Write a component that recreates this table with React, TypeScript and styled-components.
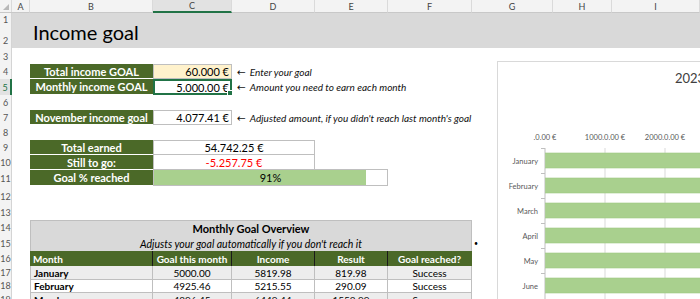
import React from 'react';
import styled, { createGlobalStyle, css } from 'styled-components';

const GlobalStyle = createGlobalStyle`
  html, body {
    margin: 0;
    padding: 0;
    background: #fff;
    overflow: hidden;
  }
  body {
    font-family: Lato, "Liberation Sans", sans-serif;
  }
`;

const GREEN = '#4b6928';
const EXCEL = '#217346';
const LINE = '#bfbfbf';

const COLS = ['A', 'B', 'C', 'D', 'E', 'F', 'G', 'H', 'I'];
const COL_WIDTHS = [18, 123, 79, 83, 73, 84, 81, 59, 88];
const ROW_HEIGHTS = [14, 21, 16, 15, 16, 15, 15, 15, 15, 15, 16, 18, 16, 15, 16, 15, 14, 13, 14];

// grid line of a sheet column, the first grid column is the row header
const col = (letter: string) => COLS.indexOf(letter) + 2;

type Place = { $c: number; $r: number; $cs?: number; $rs?: number };

const place = css<Place>`
  grid-column: ${p => p.$c} / span ${p => p.$cs ?? 1};
  grid-row: ${p => p.$r + 1} / span ${p => p.$rs ?? 1};
`;

const Sheet = styled.div`
  position: relative;
  display: grid;
  grid-template-columns: 12px ${COL_WIDTHS.map(w => `${w}px`).join(' ')};
  grid-template-rows: 13px ${ROW_HEIGHTS.map(h => `${h}px`).join(' ')};
  width: 700px;
  height: 299px;
  overflow: hidden;
`;

const Corner = styled.div`
  grid-column: 1 / span 2;
  grid-row: 1;
  display: grid;
  grid-template-columns: 12px 1fr;
  background: #f3f3f3;
  border-bottom: 1px solid #c8c8c8;
`;

const CornerMark = styled.div`
  position: relative;
  border-right: 1px solid #dadada;

  &::after {
    content: '';
    position: absolute;
    right: 2px;
    bottom: 2px;
    width: 0;
    height: 0;
    border-left: 6px solid transparent;
    border-bottom: 6px solid #b8b8b8;
  }
`;

const ColHead = styled.div<Place & { $active?: boolean }>`
  ${place};
  display: flex;
  align-items: center;
  justify-content: center;
  background: ${p => (p.$active ? '#e2e2e2' : '#f3f3f3')};
  border-right: 1px solid #dadada;
  border-bottom: ${p => (p.$active ? `2px solid ${EXCEL}` : '1px solid #c8c8c8')};
  font-size: 9px;
  color: #444;
  box-sizing: border-box;
`;

const RowHead = styled.div<Place & { $active?: boolean }>`
  ${place};
  display: flex;
  align-items: flex-end;
  justify-content: center;
  padding-bottom: 2px;
  box-sizing: border-box;
  background: ${p => (p.$active ? '#e2e2e2' : '#f3f3f3')};
  border-right: ${p => (p.$active ? `2px solid ${EXCEL}` : '1px solid #d4d4d4')};
  font-size: 9px;
  line-height: 10px;
  color: ${p => (p.$active ? EXCEL : '#555')};
`;

const TitleBand = styled.div<Place>`
  ${place};
  display: flex;
  align-items: center;
  padding: 2px 0 0 21px;
  background: #d9d9d9;
  font-size: 20px;
  color: #000;
`;

const Label = styled.div<Place>`
  ${place};
  display: flex;
  align-items: center;
  justify-content: center;
  background: ${GREEN};
  border-bottom: 1px solid #fff;
  color: #fff;
  font-weight: 700;
  font-size: 11px;
  white-space: nowrap;
`;

const Value = styled.div<Place & { $bg?: string; $align?: string; $color?: string; $top?: boolean; $selected?: boolean }>`
  ${place};
  position: relative;
  display: flex;
  align-items: center;
  justify-content: ${p => p.$align ?? 'flex-end'};
  padding: 0 2px;
  box-sizing: border-box;
  background: ${p => p.$bg ?? '#fff'};
  color: ${p => p.$color ?? '#000'};
  border: 1px solid ${LINE};
  border-top-width: ${p => (p.$top === false ? 0 : 1)}px;
  font-size: 11px;
  white-space: nowrap;

  ${p =>
    p.$selected &&
    css`
      border: 2px solid ${EXCEL};
      padding: 0 1px;

      &::after {
        content: '';
        position: absolute;
        right: -3px;
        bottom: -3px;
        width: 4px;
        height: 4px;
        background: ${EXCEL};
        border: 1px solid #fff;
      }
    `}
`;

const Note = styled.div<Place>`
  ${place};
  display: flex;
  align-items: center;
  gap: 4px;
  padding-left: 5px;
  font-style: italic;
  font-size: 10px;
  white-space: nowrap;
  color: #111;
`;

const Arrow = styled.span`
  font-style: normal;
  font-family: "DejaVu Sans", sans-serif;
  font-size: 10.5px;
  line-height: 10px;
`;

const Progress = styled.div<Place>`
  ${place};
  position: relative;
  display: flex;
  align-items: center;
  justify-content: center;
  margin-top: -1px;
  border: 1px solid ${LINE};
  font-size: 11px;
`;

const ProgressFill = styled.div`
  position: absolute;
  left: 0;
  top: 0;
  bottom: 0;
  background: #a9d08e;
`;

const ProgressText = styled.span`
  position: relative;
`;

const TableTitle = styled.div<Place>`
  ${place};
  display: flex;
  flex-direction: column;
  align-items: center;
  justify-content: center;
  gap: 3px;
  background: #d9d9d9;
  border: 1px solid ${LINE};
  border-bottom: none;
  font-size: 10.5px;
`;

const TableName = styled.div`
  font-weight: 700;
  font-size: 11px;
`;

const TableHint = styled.div`
  font-style: italic;
`;

const Head = styled.div<Place & { $left?: boolean; $last?: boolean }>`
  ${place};
  display: flex;
  align-items: center;
  justify-content: ${p => (p.$left ? 'flex-start' : 'center')};
  padding-left: ${p => (p.$left ? 3 : 0)}px;
  background: ${GREEN};
  color: #fff;
  font-weight: 700;
  font-size: 10px;
  border-right: 1px solid ${p => (p.$last ? GREEN : '#1a1a1a')};
`;

const Cell = styled.div<Place & { $shade?: boolean; $left?: boolean; $bold?: boolean }>`
  ${place};
  display: flex;
  align-items: center;
  justify-content: ${p => (p.$left ? 'flex-start' : 'center')};
  padding-left: ${p => (p.$left ? 3 : 0)}px;
  background: ${p => (p.$shade ? '#ededed' : '#fff')};
  border-right: 1px solid ${LINE};
  border-bottom: 1px solid ${LINE};
  border-left: ${p => (p.$left ? `1px solid ${LINE}` : 'none')};
  font-weight: ${p => (p.$bold ? 700 : 400)};
  font-size: 10px;
  color: #000;
`;

const Stray = styled.div<Place>`
  ${place};
  display: flex;
  align-items: center;
  padding-left: 2px;
  font-size: 7px;
`;

const ChartBox = styled.div`
  position: absolute;
  left: 497px;
  top: 61px;
  width: 384px;
  height: 280px;
  background: #fff;
  border: 1px solid #d9d9d9;
`;

const months = [
  { name: 'January', goal: 5000.0, income: 5819.98 },
  { name: 'February', goal: 4925.46, income: 5215.55 },
  { name: 'March', goal: 4896.45, income: 6449.44 },
  { name: 'April', goal: 4720.12, income: 4910.3 },
  { name: 'May', goal: 4700.5, income: 5384.1 },
  { name: 'June', goal: 4610.0, income: 5102.75 },
];

const Chart = () => {
  const axisX = 47;
  const perK = 60;
  const top = 86;
  const pitch = 25;
  return (
    <ChartBox>
      <svg width="384" height="280" fontFamily="Lato, 'Liberation Sans', sans-serif">
        <text x="192" y="21" fontSize="13" fill="#404040" textAnchor="middle">2023</text>
        {[0, 1, 2, 3, 4, 5].map(k => (
          <g key={k}>
            <text x={axisX + k * perK} y="78" fontSize="7.5" fill="#595959" textAnchor="middle">
              {`${k === 0 ? '' : k * 1000}.0.00 €`}
            </text>
            {k > 0 && <line x1={axisX + k * perK} x2={axisX + k * perK} y1={top} y2="280" stroke="#d9d9d9" />}
          </g>
        ))}
        <line x1={axisX} x2={axisX} y1={top} y2="280" stroke="#bfbfbf" />
        {months.map((m, i) => (
          <g key={m.name}>
            <line x1={axisX - 4} x2={axisX} y1={top + i * pitch + 0.5} y2={top + i * pitch + 0.5} stroke="#bfbfbf" />
            <rect
              x={axisX + 0.5}
              y={top + i * pitch + 5}
              width={(m.income / 1000) * perK}
              height="15"
              fill="#a9d08e"
              stroke="#9ec883"
              strokeWidth="0.6"
            />
            <text x="40" y={top + i * pitch + 15.5} fontSize="7.5" fill="#595959" textAnchor="end">
              {m.name}
            </text>
          </g>
        ))}
      </svg>
    </ChartBox>
  );
};

export default function App() {
  const reached = 91;
  const headers = ['Goal this month', 'Income', 'Result', 'Goal reached?'];
  return (
    <>
      <GlobalStyle />
      <Sheet>
        <Corner>
          <CornerMark />
        </Corner>
        {COLS.map(letter => (
          <ColHead key={letter} $c={col(letter)} $r={0} $active={letter === 'C'}>
            {letter}
          </ColHead>
        ))}
        {ROW_HEIGHTS.map((_, i) => (
          <RowHead key={i} $c={1} $r={i + 1} $active={i + 1 === 5}>
            {i + 1}
          </RowHead>
        ))}

        <TitleBand $c={col('A')} $r={1} $cs={9} $rs={2}>Income goal</TitleBand>

        <Label $c={col('B')} $r={4}>Total income GOAL</Label>
        <Value $c={col('C')} $r={4} $bg="#fff2cc">60.000 €</Value>
        <Note $c={col('D')} $r={4} $cs={4}><Arrow>←</Arrow>Enter your goal</Note>

        <Label $c={col('B')} $r={5}>Monthly income GOAL</Label>
        <Value $c={col('C')} $r={5} $selected>5.000.00 €</Value>
        <Note $c={col('D')} $r={5} $cs={4}><Arrow>←</Arrow>Amount you need to earn each month</Note>

        <Label $c={col('B')} $r={7}>November income goal</Label>
        <Value $c={col('C')} $r={7}>4.077.41 €</Value>
        <Note $c={col('D')} $r={7} $cs={4}><Arrow>←</Arrow>Adjusted amount, if you didn't reach last month's goal</Note>

        <Label $c={col('B')} $r={9}>Total earned</Label>
        <Value $c={col('C')} $r={9} $cs={2} $align="center">54.742.25 €</Value>
        <Label $c={col('B')} $r={10}>Still to go:</Label>
        <Value $c={col('C')} $r={10} $cs={2} $align="center" $color="#ff0000" $top={false}>-5.257.75 €</Value>
        <Label $c={col('B')} $r={11}>Goal % reached</Label>
        <Progress $c={col('C')} $r={11} $cs={3}>
          <ProgressFill style={{ width: `${reached}%` }} />
          <ProgressText>{reached}%</ProgressText>
        </Progress>

        <TableTitle $c={col('B')} $r={14} $cs={5} $rs={2}>
          <TableName>Monthly Goal Overview</TableName>
          <TableHint>Adjusts your goal automatically if you don't reach it</TableHint>
        </TableTitle>
        <Stray $c={col('G')} $r={15}>•</Stray>

        <Head $c={col('B')} $r={16} $left>Month</Head>
        {headers.map((h, i) => (
          <Head key={h} $c={col('C') + i} $r={16} $last={i === headers.length - 1}>{h}</Head>
        ))}

        {months.slice(0, 3).map((m, i) => {
          const row = 17 + i;
          const shade = i % 2 === 0;
          const result = m.income - m.goal;
          return (
            <React.Fragment key={m.name}>
              <Cell $c={col('B')} $r={row} $shade={shade} $left $bold>{m.name}</Cell>
              <Cell $c={col('C')} $r={row} $shade={shade}>{m.goal.toFixed(2)}</Cell>
              <Cell $c={col('D')} $r={row} $shade={shade}>{m.income.toFixed(2)}</Cell>
              <Cell $c={col('E')} $r={row} $shade={shade}>{result.toFixed(2)}</Cell>
              <Cell $c={col('F')} $r={row} $shade={shade}>{result >= 0 ? 'Success' : 'Missed'}</Cell>
            </React.Fragment>
          );
        })}

        <Chart />
      </Sheet>
    </>
  );
}
